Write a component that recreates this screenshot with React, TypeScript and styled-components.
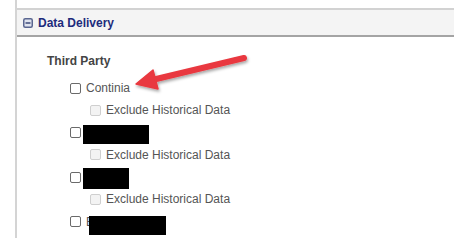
import React from 'react'
import styled, { createGlobalStyle } from 'styled-components'

const GlobalStyle = createGlobalStyle`
  html, body {
    margin: 0;
    padding: 0;
    background: #fff;
    font-family: 'Liberation Sans', Arial, sans-serif;
  }
`

interface OptionRow {
  label?: string
  redact?: number
  redactHeight?: number
  redactShift?: number
}

const options: OptionRow[] = [
  { label: 'Continia' },
  { redact: 66, redactHeight: 19, redactShift: 4 },
  { redact: 46, redactHeight: 21, redactShift: 2 },
  { label: 'E', redact: 77, redactHeight: 19, redactShift: 7 }
]

const App = () => {
  return (
    <Page>
      <GlobalStyle />
      <Panel>
        <Header>
          <CollapseIcon width="10" height="10" viewBox="0 0 10 10">
            <rect x="0.75" y="0.75" width="8.5" height="8.5" rx="1.5" fill="#dfe3ee" stroke="#5a6690" strokeWidth="1.5" />
            <line x1="2.5" y1="5" x2="7.5" y2="5" stroke="#3d4a78" strokeWidth="1.5" />
          </CollapseIcon>
          <HeaderTitle>Data Delivery</HeaderTitle>
        </Header>
        <Body>
          <GroupTitle>Third Party</GroupTitle>
          <OptionList>
            {options.map((opt, i) => (
              <React.Fragment key={i}>
                <Row>
                  <Box />
                  <Label>
                    {opt.label}
                    {opt.redact ? (
                      <Redacted
                        style={{ width: opt.redact, height: opt.redactHeight, marginTop: opt.redactShift }}
                        $overlap={!!opt.label}
                      />
                    ) : null}
                  </Label>
                </Row>
                <SubRow>
                  <Box $disabled />
                  <Label>Exclude Historical Data</Label>
                </SubRow>
              </React.Fragment>
            ))}
          </OptionList>
        </Body>
      </Panel>
      <Arrow width="472" height="248" viewBox="0 0 472 248">
        <defs>
          <filter id="shadow" x="-20%" y="-50%" width="140%" height="200%">
            <feDropShadow dx="1" dy="2" stdDeviation="1.5" floodColor="#000" floodOpacity="0.35" />
          </filter>
        </defs>
        <g filter="url(#shadow)" fill="#e9393f" stroke="#e9393f">
          <line x1="244" y1="58" x2="152" y2="80" strokeWidth="6" strokeLinecap="round" />
          <polygon points="136,84 153,70 158,89" strokeWidth="1.5" strokeLinejoin="round" />
        </g>
      </Arrow>
    </Page>
  )
}

const Page = styled.div`
  position: relative;
  width: 472px;
  height: 248px;
  overflow: hidden;
  padding-left: 15px;
  box-sizing: border-box;
`

const Panel = styled.div`
  width: 439px;
  height: 238px;
  overflow: hidden;
  border-left: 2px solid #d4d4d4;
  box-sizing: border-box;
  padding-top: 8px;
`

const Header = styled.div`
  display: flex;
  align-items: center;
  height: 29px;
  box-sizing: border-box;
  border-top: 2px solid #d2d2d2;
  border-bottom: 2px solid #a4a4a4;
  background: #f4f4f4;
  padding-left: 8px;
  margin-left: -2px;
`

const CollapseIcon = styled.svg`
  display: block;
  margin-right: 5px;
`

const HeaderTitle = styled.span`
  font-size: 12px;
  font-weight: bold;
  color: #1d2b7c;
`

const Body = styled.div`
  padding: 13px 0 0 30px;
`

const GroupTitle = styled.div`
  font-size: 12px;
  font-weight: bold;
  color: #444;
  line-height: 22px;
`

const OptionList = styled.div`
  margin-top: 5px;
  padding-left: 23px;
`

const Row = styled.div`
  display: flex;
  align-items: center;
  height: 22px;
`

const SubRow = styled(Row)`
  padding-left: 20px;
  height: 22.5px;
`

const Box = styled.span<{ $disabled?: boolean }>`
  display: inline-block;
  flex-shrink: 0;
  width: 11px;
  height: 11px;
  box-sizing: border-box;
  border: 1px solid ${(p) => (p.$disabled ? '#cfcfcf' : '#6a6a6a')};
  border-radius: 2px;
  background: ${(p) => (p.$disabled ? '#f3f3f3' : '#fff')};
  margin-right: 5px;
`

const Label = styled.span`
  display: flex;
  align-items: center;
  font-size: 12px;
  color: #555;
  white-space: nowrap;
`

const Redacted = styled.span<{ $overlap?: boolean }>`
  display: inline-block;
  background: #000;
  margin-left: ${(p) => (p.$overlap ? '-5px' : '-3px')};
`

const Arrow = styled.svg`
  position: absolute;
  left: 0;
  top: 0;
  pointer-events: none;
`

export default App
